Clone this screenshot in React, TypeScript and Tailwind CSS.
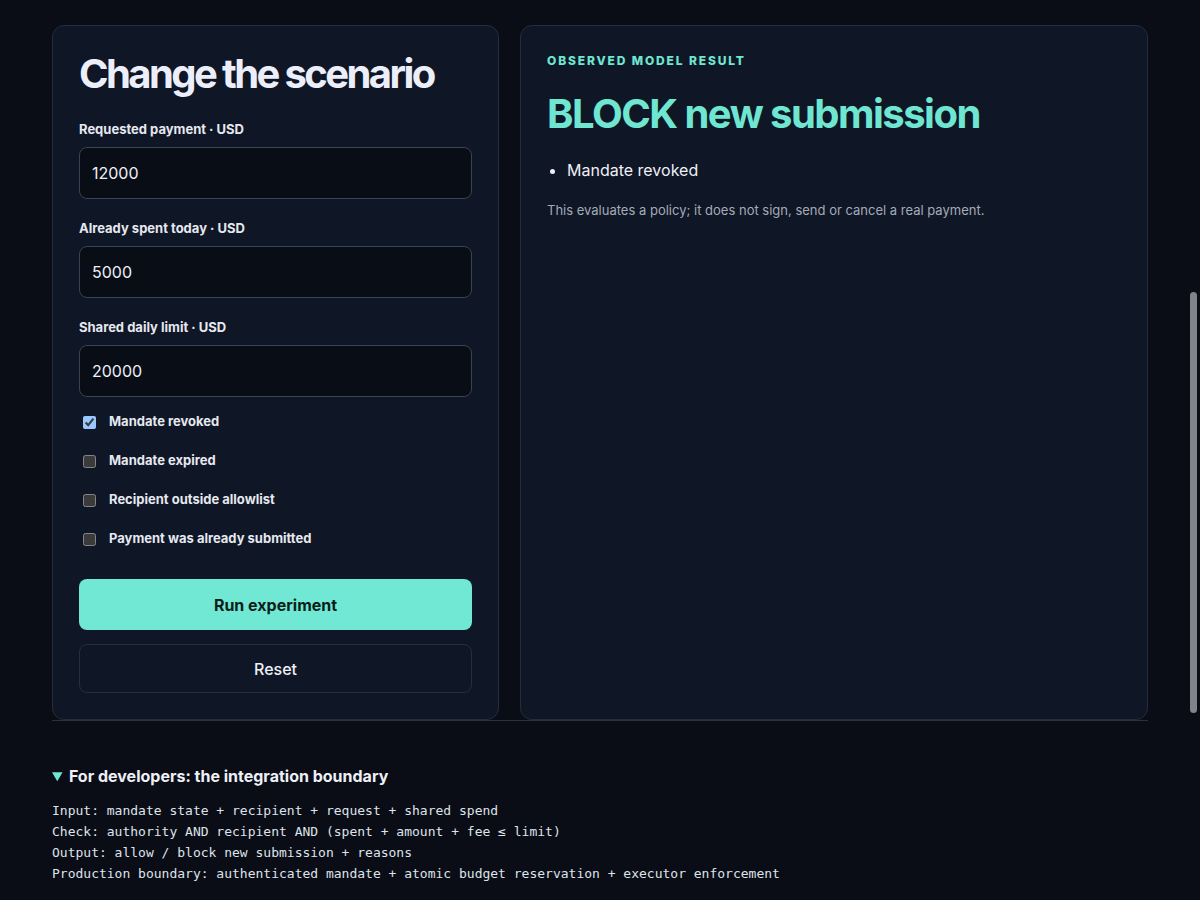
import { useState } from 'react';

const teal = 'text-[#6fe6d1]';

const fields = [
  { label: 'Requested payment · USD', value: '12000' },
  { label: 'Already spent today · USD', value: '5000' },
  { label: 'Shared daily limit · USD', value: '20000' },
];

const flags = [
  { label: 'Mandate revoked', on: true },
  { label: 'Mandate expired', on: false },
  { label: 'Recipient outside allowlist', on: false },
  { label: 'Payment was already submitted', on: false },
];

const devLines = [
  'Input: mandate state + recipient + request + shared spend',
  'Check: authority AND recipient AND (spent + amount + fee ≤ limit)',
  'Output: allow / block new submission + reasons',
  'Production boundary: authenticated mandate + atomic budget reservation + executor enforcement',
];

const ScenarioForm = () => {
  const [values, setValues] = useState(fields.map((f) => f.value));
  const [checks, setChecks] = useState(flags.map((f) => f.on));

  return (
    <div className="rounded-[12px] border border-[#252d3b] bg-[#0f1625] p-[26px]">
      <h2 className="text-[40px] leading-[44px] font-bold tracking-[-0.065em] text-[#eceefa]">
        Change the scenario
      </h2>
      <div className="mt-[24px] flex flex-col gap-[20px]">
        {fields.map((f, i) => (
          <label key={f.label} className="flex flex-col">
            <span className="mb-[9px] text-[13px] leading-[18px] font-bold text-[#e6e8f0]">
              {f.label}
            </span>
            <input
              value={values[i]}
              onChange={(e) => {
                const next = [...values];
                next[i] = e.target.value;
                setValues(next);
              }}
              className="h-[52px] rounded-[8px] border border-[#3a4352] bg-[#090d16] px-3 text-[16px] text-[#eef0f6] outline-none"
            />
          </label>
        ))}
      </div>
      <div className="mt-[15px] flex flex-col gap-[19px]">
        {flags.map((f, i) => (
          <label key={f.label} className="flex h-5 items-center scheme-dark">
            <input
              type="checkbox"
              checked={checks[i]}
              onChange={() => {
                const next = [...checks];
                next[i] = !next[i];
                setChecks(next);
              }}
              className="mt-[3px] mr-[3px] mb-[3px] ml-[4px] h-[13px] w-[13px]"
            />
            <span className="ml-[10px] text-[13px] font-bold text-[#e6e8f0]">{f.label}</span>
          </label>
        ))}
      </div>
      <button className="mt-[30px] flex h-[51px] w-full items-center justify-center rounded-[8px] bg-[#71e8d4] text-[16px] font-bold text-[#0b1d1a]">
        Run experiment
      </button>
      <button className="mt-[14px] flex h-[49px] w-full items-center justify-center rounded-[8px] border border-[#262e3c] text-[16px] font-medium text-[#eef0f6]">
        Reset
      </button>
    </div>
  );
};

const ResultPanel = () => (
  <div className="rounded-[12px] border border-[#252d3b] bg-[#0f1625] p-[26px]">
    <div className={`mt-[1px] text-[12px] leading-[16px] font-extrabold tracking-[0.155em] ${teal}`}>
      OBSERVED MODEL RESULT
    </div>
    <div className={`mt-[23px] text-[40px] leading-[44px] font-bold tracking-[-0.038em] ${teal}`}>
      BLOCK new submission
    </div>
    <ul className="mt-[22px] list-disc pl-[20px] text-[16px] leading-[24px] text-[#eef0f6]">
      <li>Mandate revoked</li>
    </ul>
    <p className="mt-[18px] text-[13px] leading-[20px] text-[#a4abb8]">
      This evaluates a policy; it does not sign, send or cancel a real payment.
    </p>
  </div>
);

const App = () => {
  return (
    <div className="h-screen overflow-hidden bg-[#0a0d16] font-['Inter','Noto_Sans',sans-serif]">
      <div className="mx-auto w-[1096px] pt-[25px]">
        <section className="grid grid-cols-[447px_1fr] gap-[21px] border-b border-[#2a3040]">
          <ScenarioForm />
          <ResultPanel />
        </section>
        <details open className="mt-[43px]">
          <summary className="cursor-pointer text-[16px] leading-[24px] font-bold text-[#eef0f6] marker:text-[#6fe6d1]">
            For developers: the integration boundary
          </summary>
          <pre className="mt-[12px] font-['DejaVu_Sans_Mono','Liberation_Mono',monospace] text-[13px] leading-[21px] text-[#dfe3ea]">
            {devLines.join('\n')}
          </pre>
        </details>
      </div>
      {/* overlay scrollbar thumb */}
      <div className="fixed top-[292px] right-[3px] h-[421px] w-[7px] rounded-full bg-[#81838a]" />
    </div>
  );
};

export default App;
